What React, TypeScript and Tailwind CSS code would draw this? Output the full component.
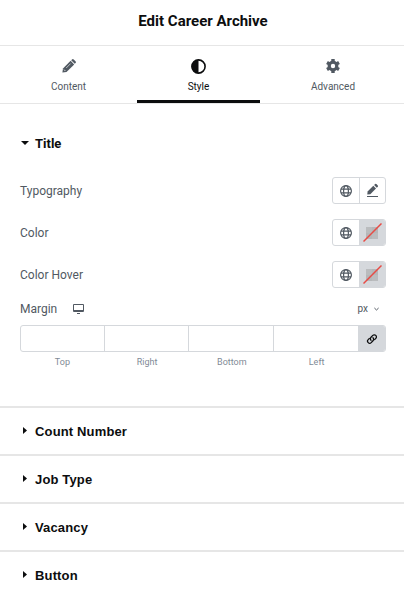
import { useState } from "react";

const sections = ["Count Number", "Job Type", "Vacancy", "Button"];
const sides = [
  { name: "Top", width: "w-[84px]" },
  { name: "Right", width: "w-[84px]" },
  { name: "Bottom", width: "w-[85px]" },
  { name: "Left", width: "w-[84px]" },
];

function PencilIcon() {
  return (
    <svg width="14" height="14" viewBox="0 0 14 14" fill="currentColor">
      <path d="M8.6 1.8 12.2 5.4 4.5 13 .4 13.6 1 9.4Z" />
      <path d="M9.2 1.2 10 .5a1.2 1.2 0 0 1 1.7 0l1.8 1.8a1.2 1.2 0 0 1 0 1.7l-.7.8Z" />
      <path d="M4.2 9 8.6 4.6" stroke="white" strokeWidth="0.6" />
      <path d="M2 10.6 3.4 12" stroke="white" strokeWidth="0.8" />
    </svg>
  );
}

function ContrastIcon() {
  return (
    <svg width="15" height="15" viewBox="0 0 15 15">
      <circle cx="7.5" cy="7.5" r="6.6" fill="none" stroke="currentColor" strokeWidth="1.6" />
      <path d="M7.5.7a6.8 6.8 0 0 0 0 13.6Z" fill="currentColor" />
    </svg>
  );
}

function GearIcon() {
  return (
    <svg width="14" height="14" viewBox="0 0 14 14" fill="none" stroke="currentColor">
      <circle cx="7" cy="7" r="3.8" strokeWidth="3.2" />
      <path
        d="M7 0.1v3M7 10.9v3M1 3.5l2.7 1.6M10.3 8.9l2.7 1.6M1 10.5l2.7-1.6M10.3 5.1l2.7-1.6"
        strokeWidth="3.4"
      />
    </svg>
  );
}

function GlobeIcon() {
  return (
    <svg width="12" height="12" viewBox="0 0 12 12" fill="none" stroke="currentColor" strokeWidth="1.2">
      <circle cx="6" cy="6" r="5.4" />
      <ellipse cx="6" cy="6" rx="2.4" ry="5.4" />
      <path d="M1 4.2h10M1 7.8h10" />
    </svg>
  );
}

function EditIcon() {
  return (
    <svg width="13" height="15" viewBox="0 0 13 15" fill="currentColor">
      <path d="M7.3 2.8 10 5.5 4.3 11.2 1.3 11.5 1.6 8.5Z" />
      <path d="m8.1 2 1-1a.9.9 0 0 1 1.3 0l1.4 1.4a.9.9 0 0 1 0 1.3l-1 1Z" />
      <path d="M1 13h11v1H1z" />
    </svg>
  );
}

function NoColorIcon() {
  return (
    <svg width="19" height="19" viewBox="0 0 19 19">
      <path d="M3 4h12v12H3z" fill="#b5b7b9" />
      <path d="M3 4h6v6H3zM9 10h6v6H9z" fill="#babcbe" />
      <path d="M0.5 18.5 18.5.5" stroke="#e84b45" strokeWidth="1.5" />
    </svg>
  );
}

function LinkIcon() {
  return (
    <svg
      width="12"
      height="12"
      viewBox="0 0 12 12"
      fill="none"
      stroke="currentColor"
      strokeWidth="1.3"
      strokeLinecap="round"
    >
      <path d="M5 7.2a2.1 2.1 0 0 1 0-3l1.8-1.8a2.1 2.1 0 0 1 3 3L8.6 6.6" />
      <path d="M7 4.8a2.1 2.1 0 0 1 0 3L5.2 9.6a2.1 2.1 0 0 1-3-3l1.2-1.2" />
    </svg>
  );
}

function Control({ label, color }: { label: string; color?: boolean }) {
  return (
    <div className="flex h-[27px] items-center justify-between">
      <span className="text-[12px] text-[#515962]">{label}</span>
      <div className="flex h-[27px] w-[54px] overflow-hidden rounded-[3px] border border-[#d5d8dc] text-[#515962]">
        <button className="flex w-[26px] items-center justify-center">
          <GlobeIcon />
        </button>
        <button
          className={`flex w-[26px] items-center justify-center border-l border-[#d5d8dc] ${
            color ? "bg-[#d5d8dc]" : ""
          }`}
        >
          {color ? <NoColorIcon /> : <EditIcon />}
        </button>
      </div>
    </div>
  );
}

export default function App() {
  const [tab, setTab] = useState("Style");
  const tabs = [
    { name: "Content", icon: <PencilIcon />, width: "w-[137px]" },
    { name: "Style", icon: <ContrastIcon />, width: "w-[123px]" },
    { name: "Advanced", icon: <GearIcon />, width: "w-[146px]" },
  ];

  return (
    <div className="h-[594px] w-[404px] overflow-hidden bg-white font-['Roboto',sans-serif] text-[#0c0d0e]">
      <header className="flex h-[46px] items-center justify-center border-b border-[#e6e6e6] pb-0.5 pl-0.5">
        <h1 className="text-[15px] font-bold">Edit Career Archive</h1>
      </header>

      <nav className="flex h-[58px] border-b border-[#e6e6e6]">
        {tabs.map((t) => (
          <button
            key={t.name}
            onClick={() => setTab(t.name)}
            className={`flex h-[57px] shrink-0 flex-col items-center border-b-[3px] pt-3 ${t.width} ${
              tab === t.name ? "border-[#0c0d0e] text-[#0c0d0e]" : "border-transparent text-[#515962]"
            }`}
          >
            <span className="flex h-4 items-center">{t.icon}</span>
            <span className="mt-1.5 text-[10px] leading-[14px]">{t.name}</span>
          </button>
        ))}
      </nav>

      <section className="h-[302px] px-5 pt-[30px]">
        <div className="flex h-5 items-center">
          <svg width="8" height="4" viewBox="0 0 8 4" className="mb-0.5 ml-px" fill="currentColor">
            <path d="M0 0h8L4 4Z" />
          </svg>
          <h2 className="ml-1.5 text-[13px] font-bold">Title</h2>
        </div>

        <div className="mt-[23px] flex w-[366px] flex-col gap-[15px]">
          <Control label="Typography" />
          <Control label="Color" color />
          <Control label="Color Hover" color />
        </div>

        <div className="mt-2.5 flex h-5 w-[366px] items-center pt-px text-[#515962]">
          <span className="text-[12px]">Margin</span>
          <svg width="11" height="10" viewBox="0 0 11 10" className="ml-4" fill="currentColor">
            <path
              fillRule="evenodd"
              d="M1 0h9a1 1 0 0 1 1 1v6a1 1 0 0 1-1 1H1a1 1 0 0 1-1-1V1a1 1 0 0 1 1-1Zm0 1v5h9V1ZM4 9h3v1H4Z"
            />
          </svg>
          <button className="ml-auto mr-[7px] flex items-center text-[10px]">
            px
            <svg width="5" height="4" viewBox="0 0 5 4" className="ml-1.5" fill="none" stroke="currentColor">
              <path d="m.4 1 2.1 2L4.6 1" />
            </svg>
          </button>
        </div>

        <div className="mt-[7px] flex h-[27px] w-[366px] overflow-hidden rounded-[3px] border border-[#d5d8dc]">
          {sides.map((side) => (
            <input
              key={side.name}
              aria-label={side.name}
              className={`border-[#d5d8dc] outline-none ${side.width} ${side.name === "Left" ? "" : "border-r"}`}
            />
          ))}
          <button className="flex w-[27px] items-center justify-center bg-[#d5d8dc]">
            <LinkIcon />
          </button>
        </div>
        <div className="mt-1 flex w-[339px] text-center text-[9px] leading-3 text-[#818a96]">
          {sides.map((side) => (
            <span key={side.name} className="flex-1">
              {side.name}
            </span>
          ))}
        </div>
      </section>

      {sections.map((name) => (
        <div key={name} className="flex h-12 items-center border-t-2 border-[#e6e6e6] pl-[23px] pt-0.5">
          <svg width="4" height="8" viewBox="0 0 4 8" className="mb-0.5" fill="currentColor">
            <path d="M0 0v7L4 3.5Z" />
          </svg>
          <h2 className="ml-2 font-['Liberation_Sans',sans-serif] text-[13px] font-bold tracking-[0.15px]">
            {name}
          </h2>
        </div>
      ))}
    </div>
  );
}
